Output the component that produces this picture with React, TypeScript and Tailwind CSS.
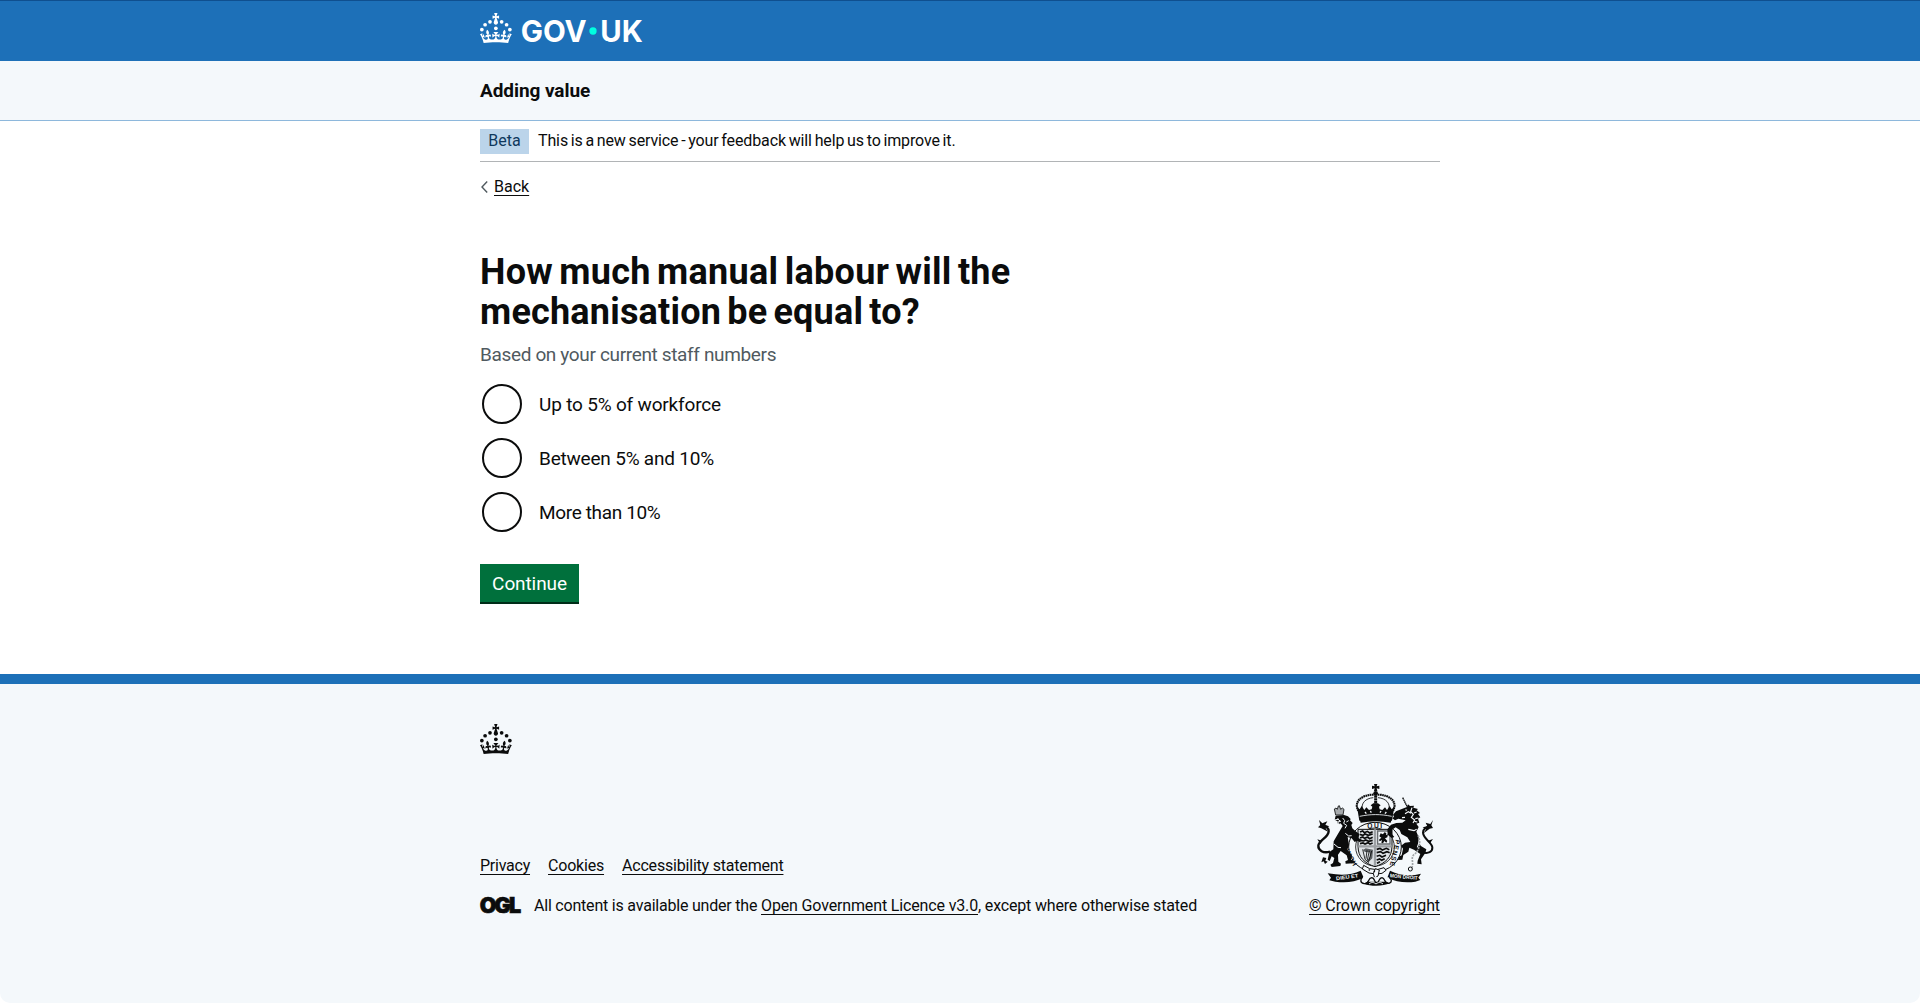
import type { ReactNode } from 'react';

const CROWN_PATH =
  'M33.1,9.8c.2-.1.3-.3.5-.5l4.6,2.4v-6.8l-4.6,1.5c-.1-.2-.3-.3-.5-.5l1.9-5.9h-6.7l1.9,5.9c-.2.1-.3.3-.5.5l-4.6-1.5v6.8l4.6-2.4c.1.2.3.3.5.5l-2.6,8c-.9,2.8,1.2,5.7,4.1,5.7h0c3,0,5.1-2.9,4.1-5.7l-2.6-8ZM37,37.9s-3.4,3.8-4.1,6.1c2.2,0,4.2-.5,6.4-2.8l-.7,8.5c-2-2.8-4.4-4.1-5.7-3.8.1,3.1.5,6.7,5.8,7.2,3.7.3,6.7-1.5,7-3.8.4-2.6-2-4.3-3.7-1.6-1.4-4.5,2.4-6.1,4.9-3.2-1.9-4.5-1.8-7.7,2.4-10.9,3,4,2.6,7.3-1.2,11.1,2.4-1.3,6.2,0,4,4.6-1.2-2.8-3.7-2.2-4.2.2-.3,1.7.7,3.7,3,4.2,1.9.3,4.7-.9,7-5.9-1.3,0-2.4.7-3.9,1.7l2.4-8c.6,2.3,1.4,3.7,2.2,4.5.6-1.6.5-2.8,0-5.3l5,1.8c-2.6,3.6-5.2,8.7-7.3,17.5-7.4-1.1-15.7-1.7-24.5-1.7h0c-8.8,0-17.1.6-24.5,1.7-2.1-8.9-4.7-13.9-7.3-17.5l5-1.8c-.5,2.5-.6,3.7,0,5.3.8-.8,1.6-2.3,2.2-4.5l2.4,8c-1.5-1-2.6-1.7-3.9-1.7,2.3,5,5.2,6.2,7,5.9,2.3-.4,3.3-2.4,3-4.2-.5-2.4-3-3.1-4.2-.2-2.2-4.6,1.6-6,4-4.6-3.7-3.7-4.2-7.1-1.2-11.1,4.2,3.2,4.3,6.4,2.4,10.9,2.5-2.8,6.3-1.3,4.9,3.2-1.8-2.7-4.1-1-3.7,1.6.3,2.3,3.3,4.1,7,3.8,5.4-.5,5.7-4.2,5.8-7.2-1.3-.2-3.7,1-5.7,3.8l-.7-8.5c2.2,2.3,4.2,2.7,6.4,2.8-.7-2.3-4.1-6.1-4.1-6.1h10.6Z';

function Crown() {
  return (
    <g>
      <circle cx="20" cy="17.6" r="3.7" />
      <circle cx="10.2" cy="23.5" r="3.7" />
      <circle cx="3.7" cy="33.2" r="3.7" />
      <circle cx="31.7" cy="30.6" r="3.7" />
      <circle cx="43.3" cy="17.6" r="3.7" />
      <circle cx="53.2" cy="23.5" r="3.7" />
      <circle cx="59.7" cy="33.2" r="3.7" />
      <path d={CROWN_PATH} />
    </g>
  );
}

function Logotype() {
  return (
    <svg viewBox="0 0 324 60" width="162" height="30" fill="currentColor" className="overflow-visible" aria-label="GOV.UK">
      <Crown />
      <g className="font-[Inter] font-bold" fontSize="60.5">
        <text x="81.5" y="58" textLength="132" lengthAdjust="spacingAndGlyphs">GOV</text>
        <text x="240.5" y="58" textLength="85" lengthAdjust="spacingAndGlyphs">UK</text>
      </g>
      <circle cx="226" cy="36" r="7.3" fill="#00ffe0" />
    </svg>
  );
}

function RoyalArms() {
  return (
    <svg viewBox="66 42 375 306" width="125" height="102" fill="#0b0c0c" aria-hidden="true">
      {/* imperial crown */}
      <path d="M252 42h10l-2 7 8-2v10l-8-2 2 8h-10l2-8-8 2v-10l8 2z" />
      <circle cx="257" cy="70" r="7" />
      <g fill="none" stroke="#0b0c0c">
        <path d="M251 74C214 74 190 96 205 122M263 74c37 0 61 22 46 48" strokeWidth="6.5" strokeDasharray="5 1.5" />
        <path d="M250 83c-24 2-37 17-33 35M264 83c24 2 37 17 33 35" strokeWidth="2.5" />
        <path d="M257 76v40" strokeWidth="9" strokeDasharray="7 1.5" />
      </g>
      <path d="M201 110l8 8 6-10 8 12 6-8 8 8 8-2 2-8-5-4 8-6h14l8 6-5 4 2 8 8 2 8-8 6 8 8-12 6 10 8-8-7 42c-34-7-64-7-98 0z" />
      <path d="M209 139c34-7 62-7 96 0" stroke="#f4f8fb" strokeWidth="2.5" fill="none" />
      <path d="M225 126l4 5M241 123l3 5M270 128l3-5M285 131l4-5" stroke="#f4f8fb" strokeWidth="4" fill="none" />
      <path d="M209 148c34-6 62-6 96 0l-3 10c-30-6-60-6-90 0z" />
      {/* garter */}
      <ellipse cx="255" cy="231" rx="79" ry="74" fill="#f4f8fb" stroke="#0b0c0c" strokeWidth="3" />
      <ellipse cx="255" cy="231" rx="58" ry="57" fill="#f4f8fb" stroke="#0b0c0c" strokeWidth="2.5" />
      <g className="font-['Liberation_Sans'] font-bold" fontSize="20">
        <text x="232" y="173" textLength="44">QUI</text>
        <text transform="translate(202 283) rotate(-118)" textLength="54">HONI</text>
        <text transform="translate(317 208) rotate(103)" textLength="80">PENSE</text>
      </g>
      {/* quartered shield */}
      <path d="M204 178h102v50c0 34-20 52-51 62-31-10-51-28-51-62z" fill="#dfe3e6" stroke="#0b0c0c" strokeWidth="3" />
      <path d="M255 178v110M205 229h100" stroke="#9ca0a3" strokeWidth="7" />
      <g fill="none" stroke="#0b0c0c" strokeWidth="5">
        <path d="M210 186l8-3 5 5 9-4 7 5 9-4M209 193l10 3 6-4 10 4 13-4M210 204l8-3 6 4 9-4 6 5 9-4M209 211l12 2 6-3 9 4 12-3M210 221l9-2 6 3 9-4 6 4 8-3" />
        <path d="M260 238l10-3 7 5 12-5 9 4M260 248l12-3 7 5 12-5 8 3M260 259l9-3 7 5 12-5M260 270l9-3 6 4 9-5M261 280l9-5" />
      </g>
      <path d="M263 183h37v39h-37z" fill="#f4f8fb" stroke="#6b6f72" strokeWidth="4" />
      <path d="M272 190l7 3 4-6 6 2-1 6 6-2-2 9-7 3 7 8-3 5-6-5-4 7-5-2 2-8-7 4-2-5 7-6-6-4z" />
      <path d="M219 240l8-5 22 4-2 26-12 12-5-3 10-14-1-13-14-1z" fill="#5c6063" />
      <path d="M218 238l7 30 12 10M231 241l-3 25M238 242l-6 28M245 243l-9 31" fill="none" stroke="#0b0c0c" strokeWidth="2.5" />
      {/* lion */}
      <path d="M133 117l5-3 4 4 3-10 3-1 4 11 5-4 5 4-3 17h-22z" fill="#a6aaad" stroke="#0b0c0c" strokeWidth="2.5" />
      <path d="M136 137l26-2 12 4 8 8-2 4 8 8-4 6 3 10 9 8 12 9-3 12 10 5-5 8-8-5-8 4-9-11-12-4 4 24-5 14 14 17-3 13 9 4-1 7-24 1-1-7 8-4-4-14-18-13-8 11 1 21 8 6-2 7-26 3-4-7 8-5 4-15-8-5-6 14-6-4 5-23 12-8 1-24 14-24 13-22-6-8-4 3-7-5 3-3-10-6 3-12z" />
      <path d="M133 150l11-2 8 6-9 2 6 8M158 144l6 8-3 8 9 6-5 9M176 152l-7 4M142 146l5 2M166 190l10 8 9-1M132 222l12 10 9 1" stroke="#f4f8fb" strokeWidth="3" fill="none" />
      <path d="M120 245c-20 6-36-4-35-18 1-16 30-24 31-43 0-11-9-17-25-20" fill="none" stroke="#0b0c0c" strokeWidth="7" />
      <path d="M87 150l10 10 15-6-6 11 12 4-11 6 7 10-20-10-10-3 7-7zM82 208l15 5-6 9z" />
      <path d="M99 262l10 2-3 8 7 3-8 7-4-8-7 3z" />
      {/* unicorn */}
      <path d="M338 83l15 30" stroke="#0b0c0c" strokeWidth="4" strokeDasharray="5 1.2" fill="none" />
      <path d="M343 114l8-3 3-8 6 5 12-1-2 6 14 4-4 4 10 8-6 3 7 10-7 4 4 12-9 3 7 10-7 14 7 16-1 17 9 11 15 9-3 11-13 19 2 15-13-2 1-9 8-20-19-13-14-6-3 12-15 10-3 14-13 1 2-10 9-4 4-20-6-9 12-9 16-2-9-14-18-10-5-12-12-8-11 7 0 14 7 8-8 3-12-10-1-16 11-14 16-5 18-1 10-7-22-5-10 5-8-6 5-5-3-6 9-10z" />
      <path d="M345 131l10-6 8 5M366 113l-4 12 8 8-6 9 10 8-5 9M380 126l-8 3M385 144l-9 2M346 119l5 2M336 143l9-1M355 178l17 4 8-4M388 192l1 20-7 20M374 154l8 2" stroke="#f4f8fb" strokeWidth="3.5" fill="none" />
      <path d="M384 196c12 26 0 50-12 58-12 10 2 26-8 42" stroke="#a0a5a8" strokeWidth="5" strokeDasharray="6 3" fill="none" />
      <circle cx="361" cy="297" r="6" fill="none" stroke="#0b0c0c" strokeWidth="3" />
      <path d="M395 246c20 7 33-1 32-14-1-15-27-25-28-44 0-12 9-18 24-21" fill="none" stroke="#0b0c0c" strokeWidth="6" />
      <path d="M429 150l-8 12-14-4 5 11-14 3 10 6-7 12 18-14 10-2-5-8zM429 207l-15 5 5 9z" />
      {/* buckle and motto scroll */}
      <path d="M221 286l18 10 22 3 21-6 6 8-12 9-17 2-22-3-20-12z" fill="#f4f8fb" stroke="#0b0c0c" strokeWidth="3" />
      <path d="M256 296l12 4-4 18-10 6-4-13z" fill="#f4f8fb" stroke="#0b0c0c" strokeWidth="3" />
      <circle cx="238" cy="300" r="2.5" />
      <circle cx="253" cy="304" r="2.5" />
      <path d="M113 310l24 3c30 4 53-2 75-11l9 21c-27 13-52 16-85 12l-18-4 5-8z" />
      <path d="M393 311l-18 4c-30 3-51-2-75-13l-8 21c26 13 54 16 84 12l15-5-6-7z" />
      <path d="M218 321c-8 8-8 18 5 20 16 2 9-16 22-18 10 0 8 16 15 16s6-16 16-16c11 2 6 20 21 17 10-3 9-11 0-18" fill="#f4f8fb" stroke="#0b0c0c" strokeWidth="4" />
      <path d="M222 341c16 8 58 9 77-1l-10-5h-57z" />
      <path d="M237 342c7-6 14-6 21 0 7-6 14-6 21 0" stroke="#f4f8fb" strokeWidth="3" fill="none" />
      <g className="font-['Liberation_Sans'] font-bold" fontSize="15.500" fill="#f4f8fb">
        <text transform="translate(139 331) rotate(-8)" textLength="67" lengthAdjust="spacingAndGlyphs">DIEU ET</text>
        <text transform="translate(299 322) rotate(5)" textLength="84" lengthAdjust="spacingAndGlyphs">MON DROIT</text>
      </g>
    </svg>
  );
}

function Container({ className = '', children }: { className?: string; children: ReactNode }) {
  return <div className={`mx-auto w-[960px] ${className}`}>{children}</div>;
}

const linkClass = 'underline decoration-1 underline-offset-[3px]';

function Radio({ label, className }: { label: string; className: string }) {
  return (
    <label className="flex h-10 items-start gap-[17px] pl-[2px]">
      <span className="size-10 shrink-0 rounded-full border-2 border-[#0b0c0c] bg-white" />
      <span className={`pt-2 text-[19px] leading-[25px] ${className}`}>{label}</span>
    </label>
  );
}

export default function App() {
  return (
    <div className="flex h-[1003px] flex-col overflow-hidden bg-white font-[Roboto,sans-serif] text-base leading-5 text-[#0b0c0c]">
      <header className="h-[61px] shrink-0 border-t border-[#0f4f8f] bg-[#1d70b8] text-white">
        <Container className="pt-3">
          <Logotype />
        </Container>
      </header>

      <div className="h-[60px] shrink-0 border-b border-[#8eb8dc] bg-[#f4f8fb]">
        <Container className="pt-[17px]">
          <p className="text-[19px] leading-[25px] font-bold tracking-[-0.07px]">Adding value</p>
        </Container>
      </div>

      <Container className="shrink-0">
        <div className="flex h-[41px] items-start gap-[9px] border-b border-[#b1b4b6] pt-2 leading-6">
          <strong className="h-[25px] w-[49px] bg-[#bbd4ea] text-center font-normal text-[#0f385c]">Beta</strong>
          <span className="tracking-[-0.12px] [word-spacing:-1.1px]">
            This is a new service - your feedback will help us to improve it.
          </span>
        </div>

        <a className="mt-[15px] flex w-max items-center">
          <svg width="14" height="14" viewBox="0 0 14 14" fill="none" stroke="#505a5f" strokeWidth="1.4">
            <path d="M7.2 1.500L2 7l5.2 5.500" />
          </svg>
          <span className={linkClass}>Back</span>
        </a>

        <main className="pt-[55px]">
          <h1 className="text-[36px] leading-10 font-bold [word-spacing:-3px]">
            <span className="block tracking-[0.3px]">How much manual labour will the</span>
            <span className="block tracking-[0.2px]">mechanisation be equal to?</span>
          </h1>
          <p className="mt-[10px] text-[19px] leading-[25px] tracking-[-0.35px] text-[#505a5f]">
            Based on your current staff numbers
          </p>
          <div className="mt-[17px] flex flex-col gap-[14px]">
            <Radio label="Up to 5% of workforce" className="tracking-[-0.18px]" />
            <Radio label="Between 5% and 10%" className="tracking-[-0.2px]" />
            <Radio label="More than 10%" className="tracking-[-0.35px]" />
          </div>
          <button className="mt-8 block h-[38px] w-[99px] bg-[#00703c] text-center text-[19px] leading-[40px] tracking-[-0.1px] text-white shadow-[0_2px_0_#002d18]">
            Continue
          </button>
        </main>
      </Container>

      <footer className="mt-[72px] grow rounded-b-[10px] border-t-[10px] border-[#1d70b8] bg-[#f4f8fb]">
        <Container className="pt-10">
          <svg viewBox="0 0 64 60" width="32" height="30" fill="#0b0c0c">
            <Crown />
          </svg>
          <div className="mt-[30px] flex items-end justify-between">
            <div>
              <nav className="flex gap-[18px]">
                <a className={`${linkClass} tracking-[-0.24px]`}>Privacy</a>
                <a className={`${linkClass} tracking-[-0.2px]`}>Cookies</a>
                <a className={`${linkClass} tracking-[-0.2px]`}>Accessibility statement</a>
              </nav>
              <div className="mt-5 flex items-start">
                <svg viewBox="0 0 41 17" width="41" height="17" className="mr-[13px] overflow-visible">
                  <text
                    x="-0.3"
                    y="16.800"
                    className="font-[Inter] font-black"
                    fontSize="21.500"
                    textLength="41.500"
                    lengthAdjust="spacing"
                    fill="#0b0c0c"
                    stroke="#0b0c0c"
                    strokeWidth="0.7"
                  >
                    OGL
                  </text>
                </svg>
                <p className="whitespace-pre">
                  <span className="tracking-[-0.205px]">{'All content is available under the '}</span>
                  <a className={`${linkClass} tracking-[-0.147px]`}>Open Government Licence v3.0</a>
                  <span className="tracking-[-0.169px]">, except where otherwise stated</span>
                </p>
              </div>
            </div>
            <div className="flex w-[131px] flex-col items-center">
              <RoyalArms />
              <a className={`mt-[10px] whitespace-nowrap tracking-[-0.087px] ${linkClass}`}>© Crown copyright</a>
            </div>
          </div>
        </Container>
      </footer>
    </div>
  );
}
